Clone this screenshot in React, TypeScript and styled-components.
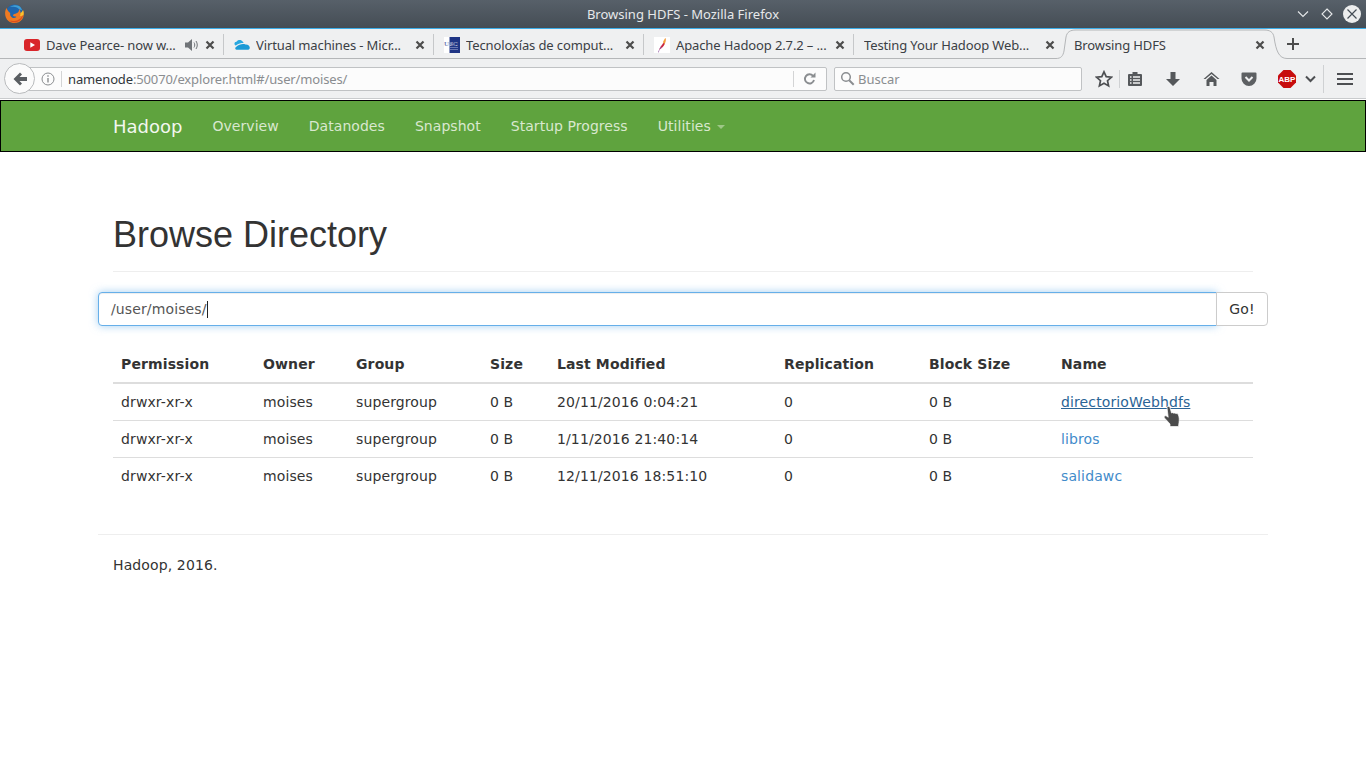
import styled, { createGlobalStyle } from 'styled-components';

const GlobalStyle = createGlobalStyle`
	html, body {
		margin: 0;
		padding: 0;
		background: #fff;
	}
	body {
		width: 1366px;
		height: 768px;
		overflow: hidden;
		font-family: 'DejaVu Sans', sans-serif;
		font-size: 14px;
		letter-spacing: 0.12px;
		color: #333;
	}
	* {
		box-sizing: border-box;
	}
`;

const TitleBar = styled.div`
	position: relative;
	height: 29px;
	display: flex;
	align-items: center;
	justify-content: center;
	background: linear-gradient(#576069, #454d55);
	border-bottom: 1px solid #3daee9;
	color: #e6e8ea;
	font-family: 'Noto Sans', sans-serif;
	font-size: 13px;
	letter-spacing: 0;
`;

const AppLogo = styled.svg`
	position: absolute;
	left: 4px;
	top: 4px;
`;

const WindowButtons = styled.div`
	position: absolute;
	right: 4px;
	top: 4px;
	display: flex;
	align-items: center;
	gap: 6px;
`;

const TabStrip = styled.div`
	height: 30px;
	display: flex;
	padding-left: 14px;
	background: #eff0f1;
	border-bottom: 1px solid #b4b6b8;
	font-family: 'Noto Sans', sans-serif;
	font-size: 13px;
	letter-spacing: -0.12px;
	color: #3b4045;
`;

const Tab = styled.div<{ $divider?: boolean }>`
	position: relative;
	width: 210px;
	height: 30px;
	display: flex;
	align-items: center;
	padding: 1px 9px 0 10px;
	gap: 6px;
	${(p) =>
		p.$divider &&
		`
		&::after {
			content: '';
			position: absolute;
			right: 0;
			top: 5px;
			bottom: 4px;
			width: 1px;
			background: #c6c8ca;
		}
	`}
`;

const ActiveTabShape = styled.svg`
	position: absolute;
	left: -8px;
	top: 0;
`;

const TabLabel = styled.span`
	position: relative;
	flex: 1;
	white-space: nowrap;
	overflow: hidden;
`;

const TabClose = styled.span`
	position: relative;
	display: flex;
`;

const NewTab = styled.div`
	width: 34px;
	margin-left: 2px;
	padding-top: 1px;
	display: flex;
	align-items: center;
	justify-content: center;
`;

const NavToolbar = styled.div`
	height: 40px;
	display: flex;
	align-items: center;
	padding-left: 4px;
	background: #eff0f1;
	border-bottom: 1px solid #c9cbcd;
	letter-spacing: 0;
`;

const BackButton = styled.div`
	position: relative;
	z-index: 1;
	width: 31px;
	height: 31px;
	flex: none;
	display: flex;
	align-items: center;
	justify-content: center;
	border: 1px solid #b9bbbd;
	border-radius: 50%;
	background: #fbfbfb;
`;

const UrlBox = styled.div`
	width: 808px;
	height: 24px;
	flex: none;
	margin-left: -16px;
	padding-left: 21px;
	display: flex;
	align-items: center;
	background: #fcfcfc;
	border: 1px solid #c0c2c4;
	border-radius: 2px;
	font-family: 'Noto Sans', sans-serif;
	font-size: 13px;
	letter-spacing: -0.14px;
	color: #8a8d90;
`;

const UrlHost = styled.span`
	color: #31363b;
`;

const UrlSeparator = styled.span<{ $gap: number }>`
	width: 1px;
	height: 16px;
	background: #d3d4d5;
	margin: 0 ${(p) => p.$gap}px;
	flex: none;
`;

const UrlText = styled.span`
	flex: 1;
	white-space: nowrap;
`;

const SearchBox = styled.div`
	width: 248px;
	height: 24px;
	flex: none;
	margin-left: 7px;
	padding-left: 5px;
	display: flex;
	align-items: center;
	gap: 3px;
	background: #fcfcfc;
	border: 1px solid #c0c2c4;
	border-radius: 2px;
	font-family: 'Noto Sans', sans-serif;
	font-size: 13px;
	color: #8a8d90;
`;

const Slot = styled.div<{ $w: number; $ml?: number }>`
	width: ${(p) => p.$w}px;
	margin-left: ${(p) => p.$ml ?? 0}px;
	height: 24px;
	flex: none;
	display: flex;
	align-items: center;
	justify-content: center;
`;

const ToolSeparator = styled.span<{ $h: number; $ml?: number }>`
	width: 1px;
	height: ${(p) => p.$h}px;
	margin-left: ${(p) => p.$ml ?? 0}px;
	background: #cfd1d3;
	flex: none;
`;

const Navbar = styled.nav`
	height: 52px;
	margin-top: 1px;
	background: #5fa33e;
	border: 1px solid #000;
`;

const NavInner = styled.div`
	width: 1170px;
	height: 50px;
	margin: 0 auto;
	display: flex;
	align-items: center;
	letter-spacing: 0.05px;
`;

const Brand = styled.a`
	font-size: 18px;
	letter-spacing: 0;
	color: #fff;
	opacity: 0.92;
	padding: 0 15px;
`;

const NavLink = styled.a`
	padding: 0 15px;
	color: #d9e8cf;
	display: flex;
	align-items: center;
`;

const Caret = styled.span`
	display: inline-block;
	margin-left: 6px;
	margin-top: 2px;
	border-top: 4px solid #9ec787;
	border-left: 4px solid transparent;
	border-right: 4px solid transparent;
`;

const Container = styled.div`
	width: 1170px;
	margin: 0 auto;
	padding: 0 15px;
`;

const PageHeader = styled.div`
	margin-top: 40px;
	padding-bottom: 9px;
	border-bottom: 1px solid #eee;
	height: 80px;
`;

const Heading = styled.h1`
	margin: 0;
	padding-top: 23px;
	font-family: 'Liberation Sans', sans-serif;
	font-size: 36px;
	font-weight: 400;
	line-height: 40px;
	letter-spacing: 0;
	color: #333;
`;

const InputRow = styled.div`
	display: flex;
	margin: 20px -15px 0;
	height: 34px;
`;

const PathInput = styled.div`
	flex: 1;
	display: flex;
	align-items: center;
	padding: 0 12px;
	background: #fff;
	border: 1px solid #66afe9;
	border-radius: 4px 0 0 4px;
	box-shadow: inset 0 1px 1px rgba(0, 0, 0, 0.075), 0 0 8px rgba(102, 175, 233, 0.6);
	color: #555;
`;

const TextCursor = styled.span`
	width: 1px;
	height: 17px;
	background: #222;
`;

const GoButton = styled.div`
	width: 52px;
	margin-left: -1px;
	display: flex;
	align-items: center;
	justify-content: center;
	background: #fff;
	border: 1px solid #ccc;
	border-radius: 0 4px 4px 0;
`;

const Table = styled.table`
	width: 1140px;
	margin-top: 20px;
	border-collapse: collapse;
	table-layout: fixed;
`;

const HeadCell = styled.th`
	height: 37px;
	padding: 8px;
	text-align: left;
	border-bottom: 2px solid #ddd;
	font-weight: 700;
`;

const Cell = styled.td<{ $first?: boolean }>`
	height: 37px;
	padding: 8px;
	border-top: ${(p) => (p.$first ? 'none' : '1px solid #ddd')};
	white-space: nowrap;
`;

const FileLink = styled.a<{ $hover?: boolean }>`
	color: ${(p) => (p.$hover ? '#2a6496' : '#428bca')};
	text-decoration: ${(p) => (p.$hover ? 'underline' : 'none')};
`;

const Footer = styled.div`
	margin: 40px -15px 0;
	padding: 22px 15px 0;
	border-top: 1px solid #eee;
`;

const HandCursor = styled.svg`
	position: absolute;
	left: 1162px;
	top: 405px;
`;

const columns = [
	['Permission', 142],
	['Owner', 93],
	['Group', 134],
	['Size', 67],
	['Last Modified', 227],
	['Replication', 145],
	['Block Size', 132],
	['Name', 200],
] as const;

const rows = [
	{ modified: '20/11/2016 0:04:21', name: 'directorioWebhdfs', hover: true },
	{ modified: '1/11/2016 21:40:14', name: 'libros', hover: false },
	{ modified: '12/11/2016 18:51:10', name: 'salidawc', hover: false },
];

const CloseIcon = () => (
	<TabClose>
		<svg width="10" height="10" viewBox="0 0 10 10">
			<path d="M1.5 1.5l7 7M8.5 1.5l-7 7" stroke="#4d4d4d" strokeWidth="2.2" />
		</svg>
	</TabClose>
);

const YoutubeIcon = () => (
	<svg width="16" height="16" viewBox="0 0 16 16">
		<rect y="2" width="16" height="12" rx="3" fill="#d9252a" />
		<path d="M6.3 5.2L11 8l-4.700 2.800z" fill="#fff" />
	</svg>
);

const CloudIcon = () => (
	<svg width="16" height="16" viewBox="0 0 16 16">
		<path d="M1.800 8.500C-.4 7.500.3 4.800 2.500 4.800 3.500 2.500 7 2.200 8.300 4.300 9.300 5 9.500 5.500 9.500 6 7 6 4.500 6.500 1.800 8.500z" fill="#29a8e0" />
		<path d="M2.500 12.800C.8 12.500.8 10.300 2.300 9.800 5 7.500 8.500 6.500 11.500 7.500 14 7.300 16 9 15.800 11c-.2 1.200-1 1.800-2.300 1.800z" fill="#1b9ad6" />
	</svg>
);

const UscIcon = () => (
	<svg width="16" height="16" viewBox="0 0 16 16">
		<rect width="16" height="16" fill="#fff" />
		<rect x="5.500" width="10.500" height="16" fill="#1f3585" />
		<text x="0" y="8.500" fontSize="7" fontWeight="700" fontFamily="Liberation Serif, serif" fill="#5a6aa8" stroke="#fff" strokeWidth="0.15">USC</text>
		<path d="M6 10.500h8M6 12.500h8" stroke="#7d89bd" strokeWidth="0.8" />
	</svg>
);

const FeatherIcon = () => (
	<svg width="16" height="16" viewBox="0 0 16 16">
		<rect width="16" height="16" fill="#fff" />
		<path d="M11 4.500C8.500 6.500 6.500 9.500 5 13c2.400-1.300 4.500-3.500 5.500-5.500z" fill="#c9243f" />
		<path d="M11.500 1C11 1.500 11 3 10.500 4 10.200 5 10.300 6.500 10.500 7.500 11.500 5.500 12 3 11.500 1z" fill="#ee8a2f" />
		<path d="M11.500 1c-1 1-2 2.500-2.500 4.500l1.500 1 .8-2.500z" fill="#f6a13a" />
		<path d="M5 13c-.5 1-.8 1.800-1 2.500l.5-.1c.3-.7.6-1.400 1-2z" fill="#8b4f9e" />
		<path d="M6.500 9.500l1.500 1L5 13z" fill="#a2559c" />
	</svg>
);

export default function App() {
	return (
		<>
			<GlobalStyle />
			<TitleBar>
				<AppLogo width="20" height="20" viewBox="0 0 20 20">
					<circle cx="10.500" cy="9" r="8.500" fill="#1f66ad" />
					<path d="M6 3c2.500-2 6.500-2.500 9-1 1.500 1 2.500 2.500 3 4-2 .2-3-1-5-2.500C11 2.500 8.500 2.500 6 3z" fill="#3f9fd6" />
					<path d="M2.500 4C.3 8 .5 13.500 4.500 17c4 3.300 10.500 2.500 13.500-1.500 2-2.800 2.300-6.300 1-9.500-.5 2-1.500 3-2.500 3.500.3-1.500-.3-3.300-1.500-4.500.3 2-.8 3.500-2.500 4.200-1.500.6-3.300.7-3.500 2 0 1 1.500 1.300 3 1.300 1 .3-.5 1.800-2.300 1.500C7.500 13.700 5.500 11.500 6.300 9 5 8.500 3.500 6.500 2.500 4z" fill="#ef7a22" />
					<path d="M5 16.500c3 2.500 8 2.500 11.500-.5 1.500-1.500 2.500-3.500 2.700-5.500-1.500 3-5 6.500-8.700 6.500-2.200 0-3.900-.3-5.500-.5z" fill="#d94d1f" />
					<path d="M16.500 9c.7-.3 1.800-1.300 2.500-3 .6 1.500.8 3 .6 4.500-.7 1-2.300 1.500-3.600 1.500.5-1 .7-2 .5-3z" fill="#f9c22e" />
				</AppLogo>
				Browsing HDFS - Mozilla Firefox
				<WindowButtons>
					<svg width="18" height="20" viewBox="0 0 18 20">
						<path d="M4 7.500l5 5 5-5" stroke="#e6e8ea" strokeWidth="1.100" fill="none" />
					</svg>
					<svg width="18" height="20" viewBox="0 0 18 20">
						<path d="M9 5l5 5-5 5-5-5z" stroke="#e6e8ea" strokeWidth="1.100" fill="none" />
					</svg>
					<svg width="20" height="20" viewBox="0 0 20 20">
						<circle cx="10" cy="10" r="9" fill="#eceded" />
						<path d="M5.500 5.500l9 9M14.500 5.500l-9 9" stroke="#454d55" strokeWidth="1.200" />
					</svg>
				</WindowButtons>
			</TitleBar>
			<TabStrip>
				<Tab $divider>
					<YoutubeIcon />
					<TabLabel>Dave Pearce- now w...</TabLabel>
					<svg width="15" height="14" viewBox="0 0 15 14">
						<path d="M1 4.500h3L8 1v12L4 9.500H1z" fill="#707478" />
						<path d="M10 4.500c1 1.500 1 3.500 0 5M12 3c1.700 2.500 1.700 5.500 0 8" stroke="#707478" strokeWidth="1" fill="none" />
					</svg>
					<CloseIcon />
				</Tab>
				<Tab $divider>
					<CloudIcon />
					<TabLabel>Virtual machines - Micr...</TabLabel>
					<CloseIcon />
				</Tab>
				<Tab $divider>
					<UscIcon />
					<TabLabel>Tecnoloxías de comput...</TabLabel>
					<CloseIcon />
				</Tab>
				<Tab $divider>
					<FeatherIcon />
					<TabLabel>Apache Hadoop 2.7.2 – ...</TabLabel>
					<CloseIcon />
				</Tab>
				<Tab>
					<TabLabel>Testing Your Hadoop Web...</TabLabel>
					<CloseIcon />
				</Tab>
				<Tab>
					<ActiveTabShape width="232" height="30" viewBox="0 0 232 30">
						<path d="M0 30V29C5 29 7 27 8 22L10 8C11 3 14 1 20 1H208C214 1 217 3 218 8C220 22 223 29 231 29V30z" fill="#eff0f1" />
						<path d="M0 29.500C5 29.500 7 27 8 22L10 8C11 3 14 1 20 1H208C214 1 217 3 218 8C220 22 223 29.500 231 29.500" fill="none" stroke="#b4b6b8" />
					</ActiveTabShape>
					<TabLabel>Browsing HDFS</TabLabel>
					<CloseIcon />
				</Tab>
				<NewTab>
					<svg width="14" height="14" viewBox="0 0 14 14">
						<path d="M7 1v12M1 7h12" stroke="#4d4d4d" strokeWidth="2" />
					</svg>
				</NewTab>
			</TabStrip>
			<NavToolbar>
				<BackButton>
					<svg width="16" height="16" viewBox="0 0 16 16">
						<path d="M8 1.500L1.500 8 8 14.500l2-2L7.500 10H15V6H7.500L10 3.500z" fill="#5a5e62" />
					</svg>
				</BackButton>
				<UrlBox>
					<svg width="14" height="14" viewBox="0 0 14 14">
						<circle cx="7" cy="7" r="6" fill="none" stroke="#8a8d90" />
						<path d="M7 6v4.500M7 3.300v1.500" stroke="#8a8d90" strokeWidth="1.400" />
					</svg>
					<UrlSeparator $gap={6} />
					<UrlText>
						<UrlHost>namenode</UrlHost>:50070/explorer.html#/user/moises/
					</UrlText>
					<UrlSeparator $gap={8} />
					<Slot $w={14}>
						<svg width="13" height="13" viewBox="0 0 13 13">
							<path d="M10 3.800A4.600 4.600 0 1 0 11 8" fill="none" stroke="#8a8d90" strokeWidth="1.900" />
							<path d="M7.500 5.500h5v-5z" fill="#8a8d90" />
						</svg>
					</Slot>
					<Slot $w={10} />
				</UrlBox>
				<SearchBox>
					<svg width="15" height="15" viewBox="0 0 15 15">
						<circle cx="6" cy="6" r="4.300" fill="none" stroke="#8a8d90" strokeWidth="1.500" />
						<path d="M9.200 9.200l4.500 4.500" stroke="#8a8d90" strokeWidth="2" />
					</svg>
					Buscar
				</SearchBox>
				<Slot $w={30} $ml={7}>
					<svg width="18" height="18" viewBox="0 0 18 18">
						<path d="M9 1.800l2.200 4.800 5.200.6-3.900 3.500 1.100 5.200L9 13.300l-4.600 2.600 1.100-5.200L1.600 7.200l5.200-.6z" fill="none" stroke="#4d4f52" strokeWidth="1.700" />
					</svg>
				</Slot>
				<ToolSeparator $h={18} />
				<Slot $w={30}>
					<svg width="16" height="16" viewBox="0 0 16 16">
						<path d="M2 3h3.500V1h5v2H14a1 1 0 0 1 1 1v10a1 1 0 0 1-1 1H2a1 1 0 0 1-1-1V4a1 1 0 0 1 1-1z" fill="#55585b" />
						<path d="M3 6h1.500M6 6h7M3 9h1.500M6 9h7M3 12h1.500M6 12h7" stroke="#eff0f1" strokeWidth="1.300" />
					</svg>
				</Slot>
				<Slot $w={38} $ml={4}>
					<svg width="16" height="16" viewBox="0 0 16 16">
						<path d="M5.500 1h5v7H15l-7 7-7-7h4.500z" fill="#55585b" />
					</svg>
				</Slot>
				<Slot $w={38}>
					<svg width="17" height="16" viewBox="0 0 17 16">
						<path d="M8.500 1L.5 8h2L8.500 3l6 5h2z" fill="#55585b" />
						<path d="M3.500 9L8.500 4.500l5 4.500v6H10.500v-4h-4v4h-3z" fill="#55585b" />
					</svg>
				</Slot>
				<Slot $w={38}>
					<svg width="16" height="16" viewBox="0 0 16 16">
						<path d="M1.500 1.500h13a1 1 0 0 1 1 1v5a7.500 7.500 0 0 1-15 0v-5a1 1 0 0 1 1-1z" fill="#5d6063" />
						<path d="M4.500 6L8 9.500 11.500 6" stroke="#eff0f1" strokeWidth="2" fill="none" />
					</svg>
				</Slot>
				<Slot $w={38}>
					<svg width="18" height="18" viewBox="0 0 18 18">
						<path d="M5.500 0h7L18 5.500v7L12.500 18h-7L0 12.500v-7z" fill="#c70d0d" />
						<text x="9" y="12" fontSize="8" fontWeight="700" textAnchor="middle" fontFamily="Liberation Sans, sans-serif" fill="#fff">ABP</text>
					</svg>
				</Slot>
				<Slot $w={12} $ml={-2}>
					<svg width="11" height="8" viewBox="0 0 11 8">
						<path d="M1 1.500l4.500 4.500L10 1.500" stroke="#4d4f52" strokeWidth="2" fill="none" />
					</svg>
				</Slot>
				<ToolSeparator $h={28} $ml={7} />
				<Slot $w={42}>
					<svg width="16" height="14" viewBox="0 0 16 14">
						<path d="M0 2h16M0 7h16M0 12h16" stroke="#4d4f52" strokeWidth="2" />
					</svg>
				</Slot>
			</NavToolbar>
			<Navbar>
				<NavInner>
					<Brand>Hadoop</Brand>
					<NavLink>Overview</NavLink>
					<NavLink>Datanodes</NavLink>
					<NavLink>Snapshot</NavLink>
					<NavLink>Startup Progress</NavLink>
					<NavLink>
						Utilities
						<Caret />
					</NavLink>
				</NavInner>
			</Navbar>
			<Container>
				<PageHeader>
					<Heading>Browse Directory</Heading>
				</PageHeader>
				<InputRow>
					<PathInput>
						/user/moises/
						<TextCursor />
					</PathInput>
					<GoButton>Go!</GoButton>
				</InputRow>
				<Table>
					<colgroup>
						{columns.map(([label, width]) => (
							<col key={label} width={width} />
						))}
					</colgroup>
					<thead>
						<tr>
							{columns.map(([label]) => (
								<HeadCell key={label}>{label}</HeadCell>
							))}
						</tr>
					</thead>
					<tbody>
						{rows.map((row, i) => (
							<tr key={row.name}>
								<Cell $first={i === 0}>drwxr-xr-x</Cell>
								<Cell $first={i === 0}>moises</Cell>
								<Cell $first={i === 0}>supergroup</Cell>
								<Cell $first={i === 0}>0 B</Cell>
								<Cell $first={i === 0}>{row.modified}</Cell>
								<Cell $first={i === 0}>0</Cell>
								<Cell $first={i === 0}>0 B</Cell>
								<Cell $first={i === 0}>
									<FileLink $hover={row.hover}>{row.name}</FileLink>
								</Cell>
							</tr>
						))}
					</tbody>
				</Table>
				<Footer>Hadoop, 2016.</Footer>
			</Container>
			<HandCursor width="20" height="24" viewBox="0 0 20 24">
				<path d="M5 2.500C5 1 7.500 1 8 2.500L9.500 8c.8-.6 1.800-.4 2.200.3.800-.5 1.800-.3 2.200.4.800-.3 2-.1 2.300.8 1 2 1.300 5 .8 8l-.5 4H8v-2.500L2.500 13c-.7-1-.2-2.200.9-2.200.8 0 1.800.6 2.800 1.500z" fill="#4b4b4b" stroke="#fff" strokeWidth="0.700" />
			</HandCursor>
		</>
	);
}
